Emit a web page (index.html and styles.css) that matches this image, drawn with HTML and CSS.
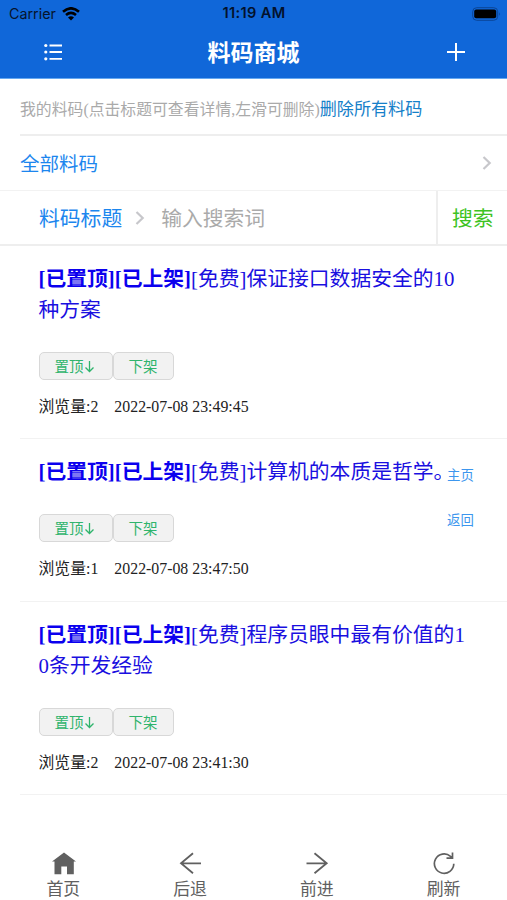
FILE: index.html
```html
<!DOCTYPE html>
<html lang="zh-CN">
<head>
<meta charset="utf-8">
<title>料码商城</title>
<link rel="stylesheet" href="styles.css">
</head>
<body>
<header class="top">
  <div class="status">
    <div class="carrier"><span>Carrier</span>
      <svg width="18" height="14" viewBox="0 0 18 14" fill="none" stroke="#000" stroke-width="2.6"><path d="M1 4.8Q9-2.2 17 4.8M4 8Q9 3.8 14 8"/><path d="M9 13.6 6 10.5Q9 8.2 12 10.5Z" fill="#000" stroke="none"/></svg>
    </div>
    <div class="clock">11:19 AM</div>
    <svg class="battery" width="30" height="14" viewBox="0 0 30 14"><rect x=".7" y=".7" width="25" height="12.6" rx="4" fill="none" stroke="#0b4596" stroke-width="1"/><rect x="2.2" y="2.5" width="22" height="8.8" rx="2" fill="#000"/><path d="M27.2 5.2Q29 7 27.2 8.8Z" fill="#0b4596"/></svg>
  </div>
  <div class="navbar">
    <svg width="20" height="20" viewBox="0 0 20 20" stroke="#fff" stroke-width="1.8"><path d="M6.5 3.5H19M6.5 10H19M6.5 16.8H19"/><g fill="#fff" stroke="none"><circle cx="2.8" cy="3.5" r="1.6"/><circle cx="2.8" cy="10" r="1.6"/><circle cx="2.8" cy="16.8" r="1.6"/></g></svg>
    <h1>料码商城</h1>
    <svg width="20" height="20" viewBox="0 0 20 20" stroke="#fff" stroke-width="2"><path d="M1 10H19M10 1V19"/></svg>
  </div>
</header>
<div class="hint"><span>我的料码(点击标题可查看详情,左滑可删除)</span><a>删除所有料码</a></div>
<div class="category"><span>全部料码</span><svg width="12" height="16" viewBox="0 0 12 16" fill="none" stroke="#c7c7cb" stroke-width="2.2"><path d="M2.5 2 8.7 8 2.5 14"/></svg></div>
<div class="search">
  <span class="field">料码标题</span>
  <svg width="12" height="16" viewBox="0 0 12 16" fill="none" stroke="#c7c7cb" stroke-width="2.2"><path d="M2.5 2 8.7 8 2.5 14"/></svg>
  <span class="placeholder">输入搜索词</span>
  <span class="go">搜索</span>
</div>
<main>
  <article class="item two">
    <h2><b>[已置顶][已上架]</b>[免费]保证接口数据安全的10<br>种方案</h2>
    <div class="actions"><button>置顶<svg width="11" height="13" viewBox="0 0 11 13" fill="none" stroke="#2fb46c" stroke-width="1.3"><path d="M5.5 1V11.5M1.5 7.5 5.5 11.5 9.5 7.5"/></svg></button><button>下架</button></div>
    <div class="meta"><span>浏览量:2</span><time>2022-07-08 23:49:45</time></div>
  </article>
  <article class="item one">
    <h2><b>[已置顶][已上架]</b>[免费]计算机的本质是哲学<span class="stop">。</span></h2>
    <div class="actions"><button>置顶<svg width="11" height="13" viewBox="0 0 11 13" fill="none" stroke="#2fb46c" stroke-width="1.3"><path d="M5.5 1V11.5M1.5 7.5 5.5 11.5 9.5 7.5"/></svg></button><button>下架</button></div>
    <div class="meta"><span>浏览量:1</span><time>2022-07-08 23:47:50</time></div>
  </article>
  <article class="item two">
    <h2><b>[已置顶][已上架]</b>[免费]程序员眼中最有价值的1<br>0条开发经验</h2>
    <div class="actions"><button>置顶<svg width="11" height="13" viewBox="0 0 11 13" fill="none" stroke="#2fb46c" stroke-width="1.3"><path d="M5.5 1V11.5M1.5 7.5 5.5 11.5 9.5 7.5"/></svg></button><button>下架</button></div>
    <div class="meta"><span>浏览量:2</span><time>2022-07-08 23:41:30</time></div>
  </article>
</main>
<aside class="float"><a>主页</a><a>返回</a></aside>
<footer class="tabs">
  <div><svg width="26" height="24" viewBox="0 0 26 24" fill="#606060"><path d="M13 1.5 25 10.5H22.8V23.3H16V15.5H10.3V23.3H3.5V10.5H1Z"/></svg><span>首页</span></div>
  <div><svg width="26" height="24" viewBox="0 0 26 24" fill="none" stroke="#606060" stroke-width="1.8"><path d="M24 12.3H3.8M16 2.2 4 12.3 16 22.3"/></svg><span>后退</span></div>
  <div><svg width="26" height="24" viewBox="0 0 26 24" fill="none" stroke="#606060" stroke-width="1.8"><path d="M2.5 12.3H23M10.5 2.2 22.7 12.3 10.5 22.3"/></svg><span>前进</span></div>
  <div><svg width="26" height="24" viewBox="0 0 26 24" fill="none" stroke="#606060" stroke-width="1.7"><path d="M22.8 12.8A9.7 9.7 0 1 1 19.5 5.3L21.5 7.2M21.5 1.5V7.2H15.5"/></svg><span>刷新</span></div>
</footer>
</body>
</html>
```
FILE: styles.css
```css
* { box-sizing: border-box; }
body { margin: 0; width: 507px; height: 900px; overflow: hidden; display: flex; flex-direction: column; position: relative; background: #fff; font-family: "Liberation Serif", "Noto Sans CJK SC", serif; }
svg { display: block; flex: none; }
.top { height: 79px; flex: none; background: #1067d9; border-bottom: 1px solid #65a8f1; }
.status { height: 27px; display: grid; grid-template-columns: 1fr auto 1fr; align-items: center; padding: 0 5px 0 9px; font: 14.3px/27px Inter, sans-serif; color: #06142c; }
.carrier { display: flex; align-items: center; gap: 6px; }
.clock { font-weight: 600; font-size: 14.6px; line-height: 27px; letter-spacing: .35px; color: #03122c; padding-right: 3px; }
.battery { justify-self: end; }
.navbar { height: 51px; display: flex; align-items: center; justify-content: space-between; padding: 0 41px 0 43px; }
.navbar svg { margin-bottom: 2px; }
h1 { margin: 0 2px 4px 0; font: 700 23px/46px "Noto Sans CJK SC", sans-serif; color: #fff; }
.hint { height: 57px; flex: none; margin-left: 20px; border-bottom: 2px solid #eee; display: flex; align-items: center; white-space: nowrap; padding-top: 3px; color: #aaa; font-size: 15.85px; }
.hint a { color: #1580c9; font-size: 17.1px; padding-bottom: 1px; }
.category { height: 55px; flex: none; display: flex; align-items: center; justify-content: space-between; padding: 0 14px 0 20px; border-bottom: 1px solid #f2f2f2; color: #1c86ee; font-size: 19.5px; }
.category span, .field, .placeholder { padding-bottom: 2px; }
.search { height: 55px; flex: none; display: flex; align-items: center; padding-left: 39px; border-bottom: 2px solid #eee; font-size: 20.8px; white-space: nowrap; }
.search svg { margin: 0 14px 0 12px; }
.field { color: #1c86ee; }
.placeholder { color: #aaa; flex: 1; padding-left: 1px; }
.go { align-self: stretch; display: flex; align-items: center; width: 71px; padding: 0 0 2px 14px; border-left: 2px solid #eee; color: #3dc323; }
main { flex: none; }
.item { margin-left: 20px; padding: 17px 0 0 18.5px; border-bottom: 1px solid #f2f2f2; }
.two { height: 193px; }
.one { height: 163px; }
h2 { margin: 0; font-size: 20.8px; line-height: 31px; font-weight: 400; color: #1a0fe0; white-space: nowrap; }
h2 b { color: #0b00ee; }
.stop { letter-spacing: -13px; }
.actions { display: flex; margin-top: 27px; }
button { height: 28px; padding: 0 15px; border: 1px solid #d8d8d8; border-radius: 5px; background: #f2f2f2; color: #2fb46c; font: 14.5px/26px "Noto Sans CJK SC", sans-serif; display: flex; align-items: center; }
button:first-child { width: 74px; padding-right: 0; }
button:last-child { width: 61px; }
.meta { display: flex; gap: 16px; margin-top: 15px; font-size: 15.85px; line-height: 24px; color: #222; }
.float { position: absolute; left: 441px; top: 453px; width: 40px; height: 90px; background: #fff; padding-left: 6px; display: flex; flex-direction: column; font-size: 13.4px; line-height: 45px; color: #3c96ee; }
.tabs { margin-top: auto; height: 49px; display: grid; grid-template-columns: repeat(4, 1fr); color: #606060; font-size: 16.9px; line-height: 25px; }
.tabs div { display: flex; flex-direction: column; align-items: center; gap: 2px; }
.tabs div:first-child svg { margin-left: 1px; }
```
